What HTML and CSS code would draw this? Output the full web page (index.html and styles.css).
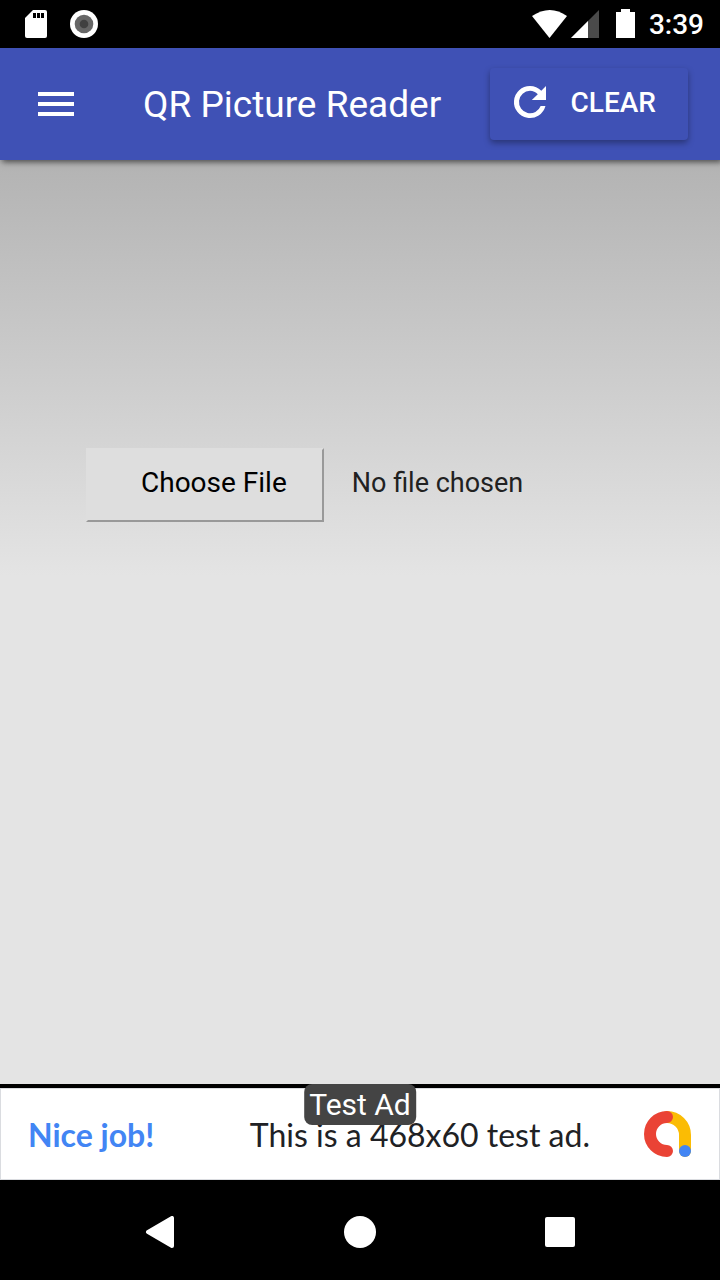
FILE: index.html
```html
<!DOCTYPE html>
<html lang="en">
<head>
    <meta charset="UTF-8">
    <meta name="viewport" content="width=device-width, initial-scale=1.0">
    <title>QR Picture Reader</title>
    <link rel="stylesheet" href="styles.css">
</head>
<body>
    <div class="status-bar">
        <svg width="24" height="30" viewBox="0 0 24 30">
            <path d="M9 1h12q2 0 2 2v24q0 2-2 2H3q-2 0-2-2V9z" fill="#fff"/>
            <path d="M9 4h3v5H9zM13 4h3v5h-3zM17 4h3v5h-3z" fill="#000"/>
        </svg>
        <svg width="28" height="28" viewBox="0 0 28 28">
            <circle cx="14" cy="14" r="14" fill="#fff"/>
            <circle cx="14" cy="14" r="9.3" fill="#666"/>
            <circle cx="14" cy="14" r="4.3" fill="#404040"/>
        </svg>
        <div class="status-right">
            <svg width="84" height="30" viewBox="0 0 84 30">
                <path d="M0 7Q18-5 35 7L17.5 29z" fill="#fff"/>
                <path d="M39 29L67 1v28z" fill="#4a4a4a"/>
                <path d="M39 29l17-17v17z" fill="#fff"/>
            </svg>
            <svg width="19" height="30" viewBox="0 0 19 30">
                <path d="M5 0h9v3h5v26H0V3h5z" fill="#fff"/>
            </svg>
            <span class="time">3:39</span>
        </div>
    </div>

    <header class="toolbar">
        <button class="menu-button" aria-label="Menu">
            <svg width="36" height="24" viewBox="0 0 36 24">
                <path d="M0 0h36v4H0zM0 10h36v4H0zM0 20h36v4H0z" fill="#fff"/>
            </svg>
        </button>
        <h1>QR Picture Reader</h1>
        <button class="clear-button" id="clear">
            <svg width="48" height="48" viewBox="0 0 24 24">
                <path d="M17.65 6.35A7.96 7.96 0 0 0 12 4a8 8 0 1 0 7.73 10h-2.4A5.6 5.6 0 1 1 12 6.4c1.5 0 2.85.6 3.9 1.7L12.9 11H20V4z" fill="#fff"/>
            </svg>
            CLEAR
        </button>
    </header>

    <main class="content">
        <input type="file" class="file-input" id="picture" accept="image/*" aria-label="Picture">
    </main>

    <div class="ad">
        <span class="ad-label">Test Ad</span>
        <span class="ad-title">Nice job!</span>
        <span class="ad-text">This is a 468x60 test ad.</span>
        <svg class="ad-logo" width="48" height="48" viewBox="0 0 48 48" fill="none" stroke-width="12" stroke-linecap="round">
            <path d="M23 7a18 18 0 0 1 18 18v16" stroke="#fbbc04"/>
            <path d="M23 7a17 17 0 0 0 0 34" stroke="#ea4335"/>
            <circle cx="41" cy="41" r="6" fill="#4285f4"/>
        </svg>
    </div>

    <nav class="nav-bar">
        <button aria-label="Back">
            <svg width="32" height="32" viewBox="0 0 32 32">
                <path d="M28 2v28L4 16z" fill="#fff" stroke="#fff" stroke-width="4" stroke-linejoin="round"/>
            </svg>
        </button>
        <button aria-label="Home">
            <svg width="32" height="32" viewBox="0 0 32 32"><circle cx="16" cy="16" r="16" fill="#fff"/></svg>
        </button>
        <button aria-label="Recent apps">
            <svg width="32" height="32" viewBox="0 0 32 32"><rect x="1" y="1" width="30" height="30" rx="2" fill="#fff"/></svg>
        </button>
    </nav>

    <script>
        document.getElementById('clear').addEventListener('click', () => {
            document.getElementById('picture').value = '';
        });
    </script>
</body>
</html>
```

FILE: styles.css
```css
* {
    box-sizing: border-box;
}
body {
    display: flex;
    flex-direction: column;
    min-height: 100vh;
    margin: 0;
    font-family: Roboto, sans-serif;
    background: #000;
}
svg {
    display: block;
    flex: none;
}
button {
    padding: 0;
    border: none;
    background: none;
    font-family: inherit;
    cursor: pointer;
}
.status-bar {
    display: flex;
    align-items: center;
    gap: 22px;
    height: 48px;
    padding: 0 16px 0 24px;
    color: #fff;
}
.status-right {
    display: flex;
    align-items: center;
    margin-left: auto;
}
.time {
    margin-left: 14px;
    font-size: 28px;
    font-weight: 500;
}
.toolbar {
    display: flex;
    align-items: center;
    position: relative;
    height: 112px;
    padding: 0 32px 0 38px;
    background: #3f51b5;
    box-shadow: 2px 2px 6px rgba(0, 0, 0, 0.6);
    color: #fff;
}
.toolbar h1 {
    margin: 0 auto 0 69px;
    font-size: 37px;
    font-weight: 400;
    white-space: nowrap;
}
.clear-button {
    display: flex;
    align-items: center;
    gap: 17px;
    height: 72px;
    padding: 0 32px 4px 16px;
    border-radius: 4px;
    box-shadow: 0 3px 6px rgba(0, 0, 0, 0.35);
    color: #fff;
    font-size: 28px;
    font-weight: 500;
}
.content {
    flex: 1;
    padding: 288px 86px 0;
    background: linear-gradient(#b3b3b3, #e4e4e4 45%);
}
.file-input {
    display: block;
    width: 100%;
    font-family: inherit;
    font-size: 27px;
    color: #212121;
}
.file-input::file-selector-button {
    height: 74px;
    margin: 0 28px 0 0;
    padding: 0 35px 6px 53px;
    border: 2px solid;
    border-color: #dedede #999 #999 #dedede;
    background: #dedede;
    font-family: inherit;
    font-size: 28px;
    color: #000;
}
.ad {
    display: flex;
    align-items: center;
    position: relative;
    height: 92px;
    margin-top: 4px;
    padding: 0 27px;
    border: 1px solid #dadce0;
    background: #fff;
    font-family: Lato, sans-serif;
    font-size: 32px;
    color: #202124;
}
.ad-title {
    color: #4285f4;
    font-weight: 700;
}
.ad-text {
    margin: 0 54px 0 auto;
}
.ad-label {
    position: absolute;
    top: -5px;
    left: 50%;
    transform: translateX(-50%);
    padding: 0 5px;
    border-radius: 8px;
    background: #444;
    color: #fff;
    font-family: Roboto, sans-serif;
    font-size: 30px;
    line-height: 41px;
    white-space: nowrap;
}
.nav-bar {
    display: flex;
    align-items: center;
    justify-content: center;
    gap: 168px;
    height: 100px;
    padding-top: 4px;
}
```
